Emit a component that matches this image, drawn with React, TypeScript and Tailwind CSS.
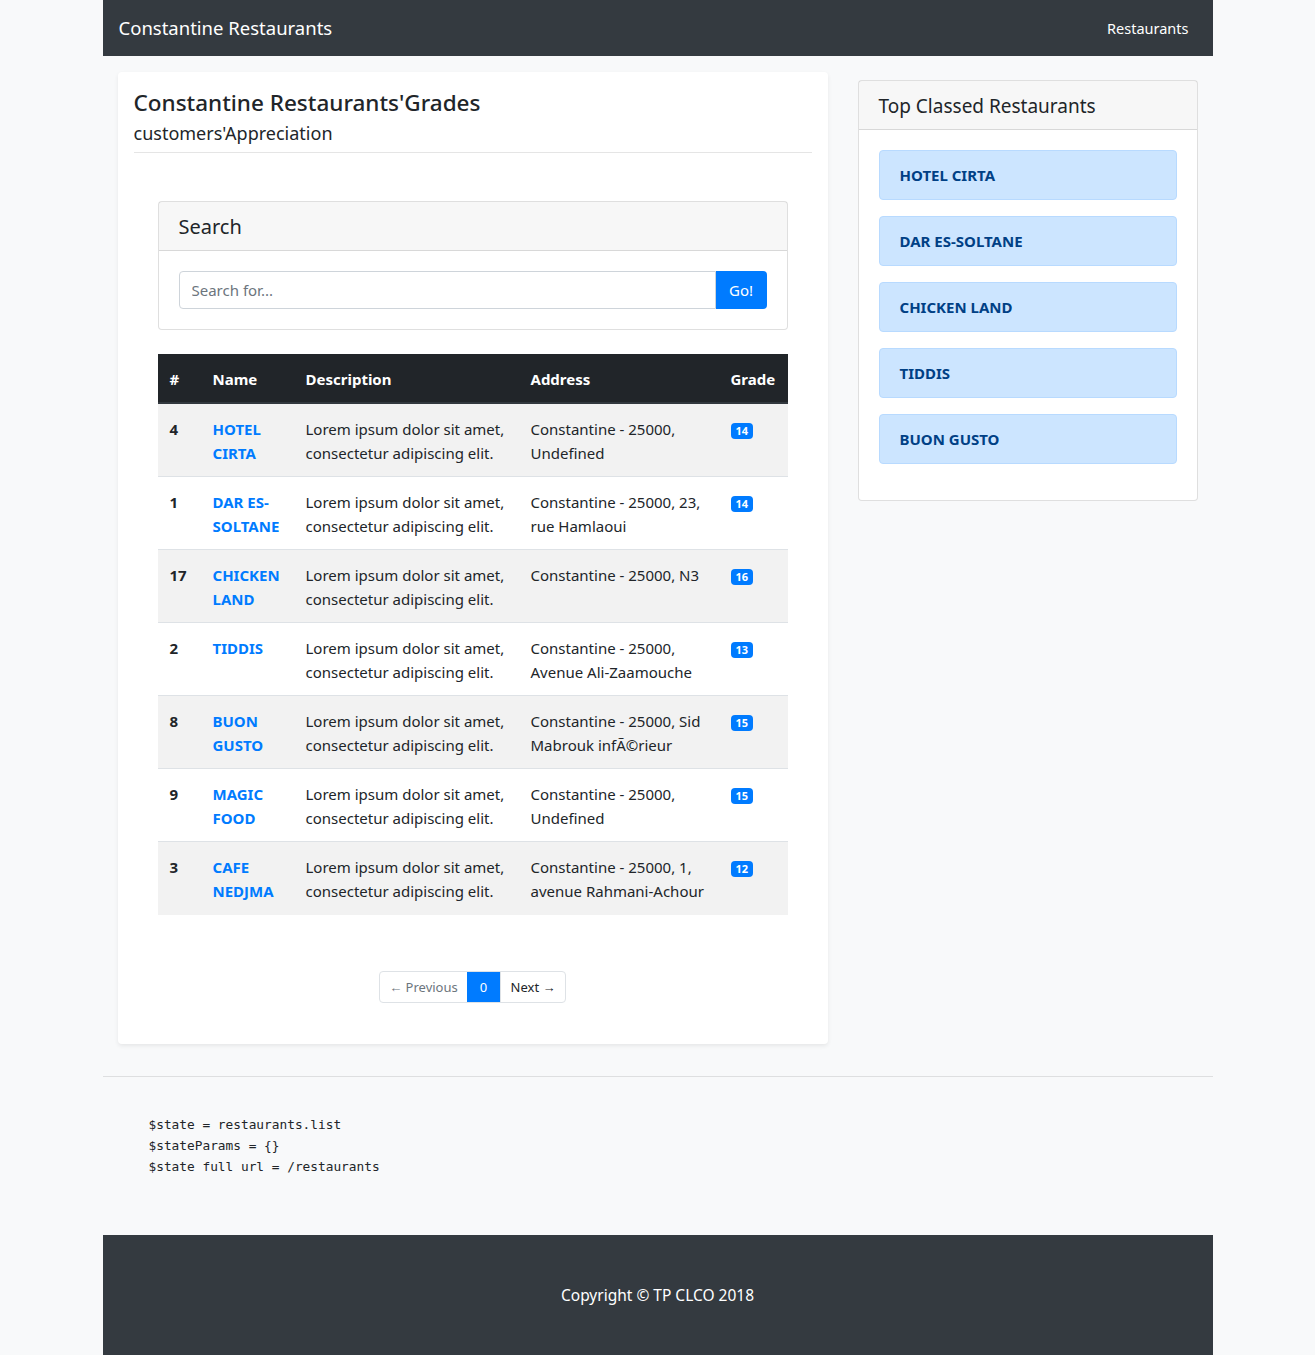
import React from "react";

const font = { fontFamily: '"Noto Sans", "Open Sans", sans-serif' };

const rows = [
  { id: "4", name: ["HOTEL", "CIRTA"], addr: ["Constantine - 25000,", "Undefined"], grade: "14" },
  { id: "1", name: ["DAR ES-", "SOLTANE"], addr: ["Constantine - 25000, 23,", "rue Hamlaoui"], grade: "14" },
  { id: "17", name: ["CHICKEN", "LAND"], addr: ["Constantine - 25000, N3"], grade: "16" },
  { id: "2", name: ["TIDDIS"], addr: ["Constantine - 25000,", "Avenue Ali-Zaamouche"], grade: "13" },
  { id: "8", name: ["BUON", "GUSTO"], addr: ["Constantine - 25000, Sid", "Mabrouk infÃ©rieur"], grade: "15" },
  { id: "9", name: ["MAGIC", "FOOD"], addr: ["Constantine - 25000,", "Undefined"], grade: "15" },
  { id: "3", name: ["CAFE", "NEDJMA"], addr: ["Constantine - 25000, 1,", "avenue Rahmani-Achour"], grade: "12" },
];

const top = ["HOTEL CIRTA", "DAR ES-SOLTANE", "CHICKEN LAND", "TIDDIS", "BUON GUSTO"];

function Lines({ lines }: { lines: string[] }) {
  return (
    <>
      {lines.map((l, i) => (
        <div key={i} className="whitespace-nowrap">
          {l}
        </div>
      ))}
    </>
  );
}

export default function App() {
  return (
    <div className="min-h-[1355px] bg-[#f8f9fa] text-[#212529] text-base leading-6" style={font}>
      <div className="mx-auto w-[1110px]">
        {/* Navbar */}
        <nav className="flex h-14 items-center justify-between bg-[#343a40] px-4">
          <span className="text-[18.5px] leading-[30px] text-white">Constantine Restaurants</span>
          <span className="px-2 text-[14.5px] text-white">Restaurants</span>
        </nav>

        {/* Main row */}
        <div className="mt-4 flex">
          <div className="w-[740px] px-[15px]">
            <div className="rounded bg-white p-4 shadow-[0_0.125rem_0.25rem_rgba(0,0,0,0.075)]">
              <h1 className="text-[22.5px] font-medium leading-[29px]">Constantine Restaurants'Grades</h1>
              <p className="mt-[4px] text-[18px] leading-6">customers'Appreciation</p>
              <hr className="mt-[7px] border-t border-[rgba(0,0,0,0.1)]" />

              <div className="px-6 pt-12 pb-[25px]">
                {/* Search card */}
                <div className="rounded border border-[rgba(0,0,0,0.125)] bg-white">
                  <div className="border-b border-[rgba(0,0,0,0.125)] bg-[rgba(0,0,0,0.03)] px-5 pt-[13px] pb-[11px] text-xl leading-6">
                    Search
                  </div>
                  <div className="p-5">
                    <div className="flex h-[38px]">
                      <input
                        className="h-full flex-1 rounded-l border border-[#ced4da] px-3 text-[15px] text-[#495057] outline-none placeholder:text-[#6c757d]"
                        placeholder="Search for..."
                        style={font}
                      />
                      <button className="h-full w-[51px] rounded-r bg-[#007bff] text-[15px] text-white">Go!</button>
                    </div>
                  </div>
                </div>

                {/* Table */}
                <table className="mt-6 w-full table-fixed border-collapse">
                  <colgroup>
                    <col className="w-[43px]" />
                    <col className="w-[93px]" />
                    <col className="w-[225px]" />
                    <col className="w-[200px]" />
                    <col className="w-[69px]" />
                  </colgroup>
                  <thead>
                    <tr className="bg-[#212529] text-left text-white">
                      <th className="border-b-2 border-[#32383e] px-3 pt-[13px] pb-[11px] text-[15px] font-bold">#</th>
                      <th className="border-b-2 border-[#32383e] px-3 pt-[13px] pb-[11px] text-[15px] font-bold">Name</th>
                      <th className="border-b-2 border-[#32383e] px-3 pt-[13px] pb-[11px] text-[15px] font-bold">Description</th>
                      <th className="border-b-2 border-[#32383e] px-3 pt-[13px] pb-[11px] text-[15px] font-bold">Address</th>
                      <th className="border-b-2 border-[#32383e] px-3 pt-[13px] pb-[11px] text-[15px] font-bold">Grade</th>
                    </tr>
                  </thead>
                  <tbody>
                    {rows.map((r, i) => (
                      <tr key={r.id} className={i % 2 === 0 ? "bg-[#f2f2f2]" : "bg-white"}>
                        <td className="h-[73px] border-t border-[#dee2e6] px-3 pt-[13px] pb-[11px] align-top text-[15px] font-bold">{r.id}</td>
                        <td className="border-t border-[#dee2e6] px-3 pt-[13px] pb-[11px] align-top text-[15px] font-bold text-[#007bff]">
                          <Lines lines={r.name} />
                        </td>
                        <td className="border-t border-[#dee2e6] px-3 pt-[13px] pb-[11px] align-top text-[15px]">
                          <Lines lines={["Lorem ipsum dolor sit amet,", "consectetur adipiscing elit."]} />
                        </td>
                        <td className="border-t border-[#dee2e6] px-3 pt-[13px] pb-[11px] align-top text-[15px]">
                          <Lines lines={r.addr} />
                        </td>
                        <td className="border-t border-[#dee2e6] px-3 pt-[13px] pb-[11px] align-top">
                          <span className="inline-block rounded bg-[#007bff] px-[5px] py-[1px] text-[11px] font-bold leading-[14px] text-white">
                            {r.grade}
                          </span>
                        </td>
                      </tr>
                    ))}
                  </tbody>
                </table>

                {/* Pagination */}
                <div className="mt-14 flex justify-center">
                  <div className="flex h-8 overflow-hidden rounded border border-[#dee2e6] text-[13px]">
                    <span className="flex w-[87px] items-center justify-center pt-[1px] text-[#6c757d]">← Previous</span>
                    <span className="flex w-[33px] items-center justify-center bg-[#007bff] pt-[1px] text-white">0</span>
                    <span className="flex w-[65px] items-center justify-center border-l border-[#dee2e6] pt-[1px] text-[#212529]">
                      Next →
                    </span>
                  </div>
                </div>
              </div>
            </div>
          </div>

          <div className="w-[370px] px-[15px] pt-2">
            <div className="rounded border border-[rgba(0,0,0,0.125)] bg-white">
              <div className="border-b border-[rgba(0,0,0,0.125)] bg-[rgba(0,0,0,0.03)] px-5 pt-[13px] pb-[11px] text-[19px] leading-6">
                Top Classed Restaurants
              </div>
              <div className="flex flex-col gap-4 p-5 pb-9">
                {top.map((t) => (
                  <div
                    key={t}
                    className="rounded border border-[#b8daff] bg-[#cce5ff] px-5 py-3 text-[15px] font-bold leading-6 text-[#004085]"
                  >
                    {t}
                  </div>
                ))}
              </div>
            </div>
          </div>
        </div>

        {/* Debug / state */}
        <hr className="mt-8 border-t border-[rgba(0,0,0,0.1)]" />
        <pre
          className="px-[46px] pt-[37px] pb-[58px] text-[12.8px] leading-[21px] text-[#212529]"
          style={{ fontFamily: '"DejaVu Sans Mono", "Liberation Mono", monospace' }}
        >
          {"$state = restaurants.list\n$stateParams = {}\n$state full url = /restaurants"}
        </pre>

        {/* Footer */}
        <footer className="flex h-[140px] justify-center bg-[#343a40] pt-12 text-[15.5px] leading-6 text-white">
          Copyright © TP CLCO 2018
        </footer>
      </div>
    </div>
  );
}
